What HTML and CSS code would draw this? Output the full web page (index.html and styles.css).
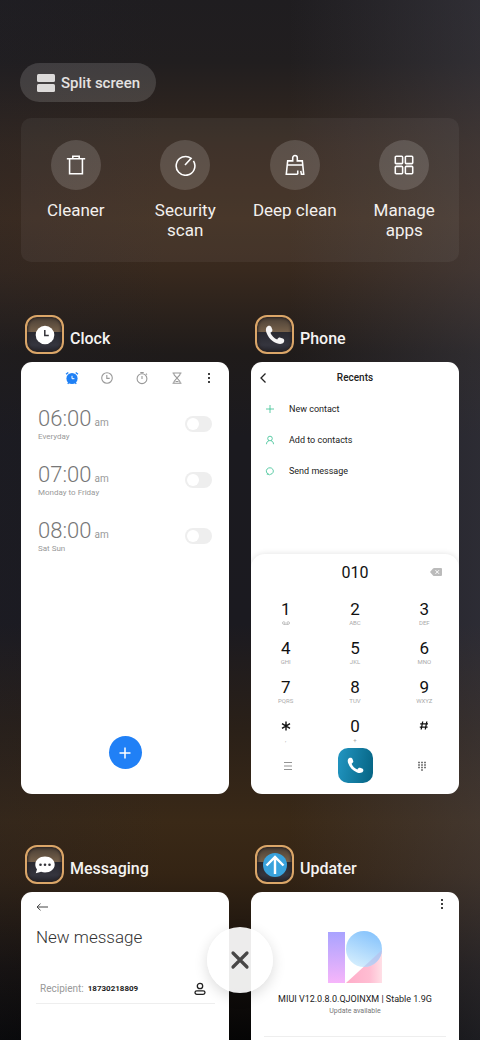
FILE: index.html
```html
<!DOCTYPE html>
<html lang="en">
<head>
<meta charset="utf-8">
<meta name="viewport" content="width=device-width, initial-scale=1">
<title>Recent apps</title>
<link rel="stylesheet" href="styles.css">
</head>
<body>
<svg class="defs" width="0" height="0" aria-hidden="true">
  <symbol id="handset" viewBox="0 0 20 20"><path d="M2.600 1.200C4.200 .3 5.800 .9 6.400 2.200L7.300 4.600C7.700 5.800 7.200 6.800 5.400 7.800C6.400 10.600 9.300 13.500 12.200 14.600C13.200 12.800 14.200 12.300 15.400 12.700L17.800 13.600C19.200 14.200 19.700 15.700 18.800 17.200C17.500 19.200 14.600 19.300 11.800 18.200C6.700 16.200 3 12.300 1.300 7.200C.5 4.600 .8 2.300 2.600 1.200Z"/></symbol>
  <symbol id="dots" viewBox="0 0 10 16"><circle cx="5" cy="4" r="1"/><circle cx="5" cy="8" r="1"/><circle cx="5" cy="12" r="1"/></symbol>
</svg>
<main class="screen">
  <button class="split"><svg width="18" height="18" viewBox="0 0 18 18"><rect width="18" height="8" rx="1.500"/><rect y="10" width="18" height="8" rx="1.500"/></svg>Split screen</button>

  <nav class="tools">
    <button class="tool"><span class="tool-icon"><svg class="line" viewBox="0 0 24 24"><path d="M2 5.200H22M5 5.200V21.500H19V5.200M8.500 5V2.500H15.500V5"/></svg></span>Cleaner</button>
    <button class="tool"><span class="tool-icon"><svg class="line" viewBox="0 0 24 24"><path d="M12 12L18.700 4.800A10.200 10.200 0 1 0 21.200 7.500"/></svg></span>Security scan</button>
    <button class="tool"><span class="tool-icon"><svg class="line" viewBox="0 0 24 24"><path d="M15 22H2.500L4 7.500H9.500V4.200A2.500 2.500 0 0 1 14.500 4.200V7.500H20L21.500 22H19L18.300 18.500M3.600 12H20.400M15 22V18"/></svg></span>Deep clean</button>
    <button class="tool"><span class="tool-icon"><svg class="line" viewBox="0 0 24 24"><rect x="2.500" y="2.500" width="8" height="8" rx="1"/><rect x="13.500" y="2.500" width="8" height="8" rx="1"/><rect x="2.500" y="13.500" width="8" height="8" rx="1"/><rect x="13.500" y="13.500" width="8" height="8" rx="1"/></svg></span>Manage apps</button>
  </nav>

  <div class="apps">
    <section class="app">
      <header class="app-head">
        <span class="app-icon"><svg viewBox="0 0 20 20"><circle cx="10" cy="10" r="9.300" fill="#fff"/><path d="M9.800 5V10.600H13.800" fill="none" stroke="#333238" stroke-width="1.500"/></svg></span>
        <h2>Clock</h2>
      </header>
      <div class="card clock">
        <div class="tabs">
          <button aria-label="Alarm"><svg width="16" height="16" viewBox="0 0 16 16"><circle cx="8" cy="8.500" r="5.600" fill="#1f80f5"/><path d="M2 4.200L4.300 2.400M14 4.200L11.700 2.400M3.700 13.800L5 12.500M12.300 13.800L11 12.500" stroke="#1f80f5" stroke-width="1.300"/><path d="M8 5.800V8.700H10.400" fill="none" stroke="#fff"/></svg></button>
          <button aria-label="World clock"><svg class="grey" width="16" height="16" viewBox="0 0 16 16"><circle cx="8" cy="8" r="5.300"/><path d="M7.800 5V8.400H10.700"/></svg></button>
          <button aria-label="Stopwatch"><svg class="grey" width="16" height="16" viewBox="0 0 16 16"><circle cx="8" cy="8.700" r="4.900"/><path d="M6.300 2.600H9.700M8 6V9M12 3.700L13 4.700"/></svg></button>
          <button aria-label="Timer"><svg class="grey" width="16" height="16" viewBox="0 0 16 16"><path d="M3.500 3H12.500M3.500 13.200H12.500M4.700 3.200C4.700 6 7.900 7 7.900 8.100C7.900 9.200 4.700 10.200 4.700 13M11.300 3.200C11.300 6 8.100 7 8.100 8.100C8.100 9.200 11.300 10.200 11.300 13M6.500 11.500H9.500"/></svg></button>
          <button aria-label="More"><svg width="10" height="16"><use href="#dots"/></svg></button>
        </div>
        <ul class="alarms">
          <li><label for="a6"><span class="time">06:00<small>am</small></span><span class="days">Everyday</span></label><input id="a6" class="switch" type="checkbox"></li>
          <li><label for="a7"><span class="time">07:00<small>am</small></span><span class="days">Monday to Friday</span></label><input id="a7" class="switch" type="checkbox"></li>
          <li><label for="a8"><span class="time">08:00<small>am</small></span><span class="days">Sat Sun</span></label><input id="a8" class="switch" type="checkbox"></li>
        </ul>
        <button class="add" aria-label="Add alarm"><svg width="12" height="12" viewBox="0 0 12 12"><path d="M6 .5V11.500M.5 6H11.500" stroke="#fff" stroke-width="1.500"/></svg></button>
      </div>
    </section>

    <section class="app">
      <header class="app-head">
        <span class="app-icon"><svg viewBox="0 0 20 20" fill="#f6f5f5"><use href="#handset"/></svg></span>
        <h2>Phone</h2>
      </header>
      <div class="card phone">
        <div class="bar">
          <button aria-label="Back"><svg width="8" height="12" viewBox="0 0 8 12"><path d="M6.500 1.500L2 6L6.500 10.500" fill="none" stroke="#222" stroke-width="1.300"/></svg></button>
          <h3>Recents</h3>
        </div>
        <div class="links">
          <button><svg class="green" width="10" height="10" viewBox="0 0 10 10"><path d="M5 1V9M1 5H9"/></svg>New contact</button>
          <button><svg class="green" width="10" height="10" viewBox="0 0 10 10"><circle cx="5" cy="3.500" r="2.300"/><path d="M1.500 9.200C1.500 7.200 2.600 6 4 5.800M8.500 9.200C8.500 7.200 7.400 6 6 5.800"/></svg>Add to contacts</button>
          <button><svg class="green" width="10" height="10" viewBox="0 0 10 10"><path d="M3.700 8.200A3.500 3.300 0 1 1 5.600 8.300L4.500 9L3.700 8.200H1.800"/></svg>Send message</button>
        </div>
        <div class="dialer">
          <div class="entry">
            <input type="tel" value="010" aria-label="Number">
            <button aria-label="Delete"><svg width="12" height="8" viewBox="0 0 12 8"><path d="M0 4L3 .6Q3.500 0 4.200 0H11Q12 0 12 1V7Q12 8 11 8H4.200Q3.500 8 3 7.400Z" fill="#bbb"/><path d="M5.500 2.200L9 5.800M9 2.200L5.500 5.800" stroke="#fff"/></svg></button>
          </div>
          <div class="keys">
            <button>1<small><svg width="8" height="4" viewBox="0 0 8 4" fill="none" stroke="#aaa" stroke-width=".7"><circle cx="1.800" cy="2" r="1.300"/><circle cx="6.200" cy="2" r="1.300"/><path d="M1.800 3.400H6.200"/></svg></small></button>
            <button>2<small>ABC</small></button>
            <button>3<small>DEF</small></button>
            <button>4<small>GHI</small></button>
            <button>5<small>JKL</small></button>
            <button>6<small>MNO</small></button>
            <button>7<small>PQRS</small></button>
            <button>8<small>TUV</small></button>
            <button>9<small>WXYZ</small></button>
            <button aria-label="Star"><svg width="10" height="20" viewBox="0 0 10 20"><path d="M5 5.500V14.500M1 7.700L9 12.300M9 7.700L1 12.300" stroke="#111" stroke-width="1.400"/></svg><small>,</small></button>
            <button>0<small>+</small></button>
            <button aria-label="Hash"><svg width="10" height="20" viewBox="0 0 10 20"><path d="M3.700 5.500L2.200 13.500M7.800 5.500L6.300 13.500M1.200 7.800H9M.8 11.200H8.600" stroke="#111" stroke-width="1.300"/></svg><small></small></button>
          </div>
          <div class="actions">
            <button aria-label="Menu"><svg width="10" height="8" viewBox="0 0 10 8"><path d="M1 .5H9M1 4H9M1 7.500H9" stroke="#777" stroke-width=".8"/></svg></button>
            <button class="call" aria-label="Call"><svg width="17" height="17" fill="#fff"><use href="#handset"/></svg></button>
            <button aria-label="Keypad"><svg width="10" height="10" viewBox="0 0 10 10"><path d="M1 1.500H9M1 4H9M1 6.500H9M4 9H6" stroke="#777" stroke-width="1.700" stroke-dasharray="2 1"/></svg></button>
          </div>
        </div>
      </div>
    </section>

    <section class="app">
      <header class="app-head">
        <span class="app-icon"><svg viewBox="0 0 20 20"><path d="M10 1.500C15.400 1.500 19.700 5 19.700 9.500S15.400 17.500 10 17.500C8.600 17.500 7.300 17.300 6.100 16.800L.8 18.200L2 14.200C.8 12.900.3 11.300.3 9.500C.3 5 4.600 1.500 10 1.500Z" fill="#fff"/><g fill="#333238"><circle cx="5.500" cy="9.700" r="1.300"/><circle cx="10" cy="9.700" r="1.300"/><circle cx="14.500" cy="9.700" r="1.300"/></g></svg></span>
        <h2>Messaging</h2>
      </header>
      <div class="card message">
        <button class="back" aria-label="Back"><svg width="12" height="8" viewBox="0 0 12 8"><path d="M4.500 .7L1 4L4.500 7.300M1 4H12" fill="none" stroke="#444"/></svg></button>
        <h3>New message</h3>
        <div class="to">
          <label for="to">Recipient:</label>
          <input id="to" type="tel" value="18730218809">
          <button aria-label="Contacts"><svg width="12" height="14" viewBox="0 0 12 14" fill="none" stroke="#222" stroke-width="1.300"><circle cx="6" cy="4" r="2.700"/><rect x="1" y="8.800" width="10" height="3.600" rx="1.800"/></svg></button>
        </div>
      </div>
    </section>

    <section class="app">
      <header class="app-head">
        <span class="app-icon"><svg class="up" viewBox="0 0 24 24"><circle cx="12" cy="12" r="12" fill="#39a2dc"/><path d="M12 21V4M3.500 12.500L12 4L20.500 12.500" fill="none" stroke="#fff" stroke-width="2.400"/></svg></span>
        <h2>Updater</h2>
      </header>
      <div class="card updater">
        <button class="more" aria-label="More"><svg width="10" height="16"><use href="#dots"/></svg></button>
        <svg class="logo" width="54" height="52" viewBox="0 0 54 52">
          <defs>
            <linearGradient id="one" x2="0" y2="1"><stop stop-color="#a9a3ff"/><stop offset="1" stop-color="#f6b5fa"/></linearGradient>
            <linearGradient id="ball" x1=".7" y1="0" x2=".3" y2="1"><stop stop-color="#86c3fc"/><stop offset="1" stop-color="#d5eefd"/></linearGradient>
            <linearGradient id="foot"><stop stop-color="#ffadc9"/><stop offset=".65" stop-color="#ffbdd2"/><stop offset="1" stop-color="#ffdfe6"/></linearGradient>
            <clipPath id="disc"><circle cx="36" cy="18" r="18"/></clipPath>
          </defs>
          <rect y="1" width="17" height="51" fill="url(#one)"/>
          <path d="M18 52L54 19V52Z" fill="url(#foot)"/>
          <circle cx="36" cy="18" r="18" fill="url(#ball)"/>
          <path d="M18 52L54 19V52Z" fill="#b8bdea" opacity=".6" clip-path="url(#disc)"/>
        </svg>
        <h3>MIUI V12.0.8.0.QJOINXM | Stable 1.9G</h3>
        <p>Update available</p>
        <hr>
      </div>
    </section>
  </div>

  <button class="close" aria-label="Close all"><svg width="20" height="20" viewBox="0 0 20 20"><path d="M3 3L17 17M17 3L3 17" stroke="#484747" stroke-width="3.200" stroke-linecap="round"/></svg></button>
</main>
</body>
</html>
```

FILE: styles.css
```css
* { box-sizing: border-box; }

body {
  margin: 0;
  background: #0a0909;
  font-family: Roboto, "Liberation Sans", sans-serif;
}

button {
  display: block;
  margin: 0;
  padding: 0;
  border: 0;
  background: none;
  color: inherit;
  font: inherit;
}

input { margin: 0; padding: 0; border: 0; background: none; font: inherit; color: inherit; }
h2, h3, p, ul { margin: 0; padding: 0; }
svg { display: block; flex: none; }
.defs { position: absolute; }

.screen {
  position: relative;
  height: 100vh;
  padding: 63px 21px 0;
  overflow: hidden;
  background:
    linear-gradient(90deg, rgba(30, 32, 44, 0.2), rgba(30, 32, 44, 0) 35%, rgba(90, 90, 105, 0) 60%, rgba(90, 90, 105, 0.28)),
    linear-gradient(#1f1d20 0, #211e1f 6%, #35281f 14%, #3f2d1f 21%, #38291e 26%, #1f1b1a 34%, #1b1a1f 42%, #1b1a20 60%, #2a2018 70%, #3a2917 79%, #342414 84%, #15100d 93%, #050505 100%);
}

.split {
  display: flex;
  align-items: center;
  gap: 6px;
  height: 39px;
  margin-left: -1px;
  padding: 0 16px 0 17px;
  border-radius: 20px;
  background: rgba(255, 255, 255, 0.14);
  color: #e4e2e1;
  font-size: 15px;
  font-weight: 500;
}
.split svg { fill: #dcdad9; }

.tools {
  display: grid;
  grid-template-columns: repeat(4, minmax(0, 1fr));
  margin-top: 16px;
  padding: 22px 0;
  border-radius: 10px;
  background: rgba(255, 255, 255, 0.05);
}
.tool {
  display: flex;
  flex-direction: column;
  align-items: center;
  gap: 10px;
  padding: 0 10px;
  color: #f3f0ee;
  font-size: 17px;
  line-height: 20px;
}
.tool-icon {
  display: grid;
  place-items: center;
  width: 50px;
  height: 50px;
  border-radius: 50%;
  background: rgba(255, 255, 255, 0.15);
}
.line { width: 22px; height: 22px; fill: none; stroke: #fff; stroke-width: 1.7; }

.apps {
  display: grid;
  grid-template-columns: repeat(2, minmax(0, 1fr));
  gap: 51px 22px;
  margin-top: 53px;
}
.app-head {
  display: flex;
  align-items: flex-end;
  gap: 6px;
  margin-bottom: 8px;
  padding-left: 4px;
}
.app-head h2 {
  padding-bottom: 5px;
  color: #f5f3f2;
  font-size: 16px;
  font-weight: 500;
  line-height: 20px;
}
.app-icon {
  display: grid;
  place-items: center;
  width: 39px;
  height: 39px;
  border: 2px solid #dba668;
  border-radius: 12px;
  background: linear-gradient(#4b4036, #75604a 42%, #292930 44%, #35353e 80%, #25252c);
  box-shadow: inset 0 0 3px 1px #292222;
}
.app-icon svg { width: 20px; height: 20px; }
.app-icon .up { width: 24px; height: 24px; }

.card {
  display: flex;
  flex-direction: column;
  aspect-ratio: 208 / 432;
  overflow: hidden;
  border-radius: 11px;
  background: #fff;
  color: #222;
}

.tabs { display: flex; gap: 19px; padding: 8px 0 0 43px; }
.grey { fill: none; stroke: #999; stroke-width: 1.1; }
.alarms {
  display: flex;
  flex-direction: column;
  gap: 18px;
  padding: 19px 17px 0;
  list-style: none;
  color: #999;
}
.alarms li { display: flex; align-items: center; justify-content: space-between; height: 38px; }
.time, .days { display: block; }
.time { font-size: 22px; font-weight: 300; line-height: 26px; color: #777; }
.time small { margin-left: 3px; font-size: 10px; font-weight: 400; line-height: 1; color: #999; }
.days { font-size: 8px; line-height: 10px; }
.switch {
  display: flex;
  align-items: center;
  appearance: none;
  width: 27px;
  height: 16px;
  padding: 0 2px;
  border-radius: 8px;
  background: #eee;
}
.switch::before { content: ""; width: 12px; height: 12px; border-radius: 50%; background: #fff; }
.switch:checked { justify-content: flex-end; background: #1f80f5; }
.add {
  display: grid;
  place-items: center;
  width: 33px;
  height: 33px;
  margin: auto auto 25px;
  border-radius: 50%;
  background: #2080f6;
}

.bar {
  display: grid;
  grid-template-columns: 8px 1fr 8px;
  align-items: center;
  padding: 8px 8px 0;
}
.bar h3 { font-size: 10px; font-weight: 500; line-height: 16px; text-align: center; }
.links { display: flex; flex-direction: column; padding: 7px 14px 0; }
.links button { display: flex; align-items: center; gap: 14px; height: 31px; font-size: 9px; }
.green { fill: none; stroke: #35bf90; stroke-width: 0.8; }
.dialer {
  margin-top: auto;
  padding-bottom: 11px;
  border-radius: 14px 14px 0 0;
  box-shadow: 0 0 6px rgba(0, 0, 0, 0.12);
  color: #111;
}
.entry {
  display: grid;
  grid-template-columns: 12px 1fr 12px;
  align-items: center;
  padding: 8px 17px 15px;
}
.entry input { grid-column: 2; width: 100%; height: 20px; font-size: 16px; text-align: center; }
.keys { display: grid; grid-template-columns: repeat(3, 1fr); row-gap: 9px; }
.keys button { display: flex; flex-direction: column; align-items: center; padding-top: 2px; font-size: 17px; line-height: 20px; }
.keys small { height: 8px; color: #aaa; font-size: 6px; line-height: 8px; }
.keys small svg { margin: 2px 0; }
.actions { display: flex; align-items: center; justify-content: space-between; padding: 4px 32px 0; }
.call {
  display: grid;
  place-items: center;
  width: 35px;
  height: 35px;
  border-radius: 10px;
  background: linear-gradient(100deg, #2296c2, #056382);
}

.message { padding: 11px 14px 0 15px; }
.back { align-self: flex-start; }
.message h3 { margin-top: 14px; color: #333; font-size: 17px; font-weight: 300; line-height: 24px; }
.to {
  display: flex;
  align-items: center;
  gap: 4px;
  height: 30px;
  margin-top: 25px;
  padding: 0 9px 0 4px;
  border-bottom: 1px solid #eee;
}
.to label { color: #999; font-size: 10px; }
.to input { flex: 1; min-width: 0; font-size: 8px; font-weight: 700; }

.updater { align-items: center; padding: 4px 13px 0; }
.more { align-self: flex-end; margin-right: -1px; }
.logo { margin-top: 19px; }
.updater h3 { margin-top: 9px; font-size: 9px; font-weight: 400; line-height: 14px; white-space: nowrap; }
.updater p { color: #777; font-size: 7px; line-height: 10px; }
.updater hr { width: 100%; height: 1px; margin: 20px 0 0; border: 0; background: #eee; }

.close {
  position: absolute;
  bottom: 47px;
  left: 50%;
  display: grid;
  place-items: center;
  width: 66px;
  height: 66px;
  margin-left: -33px;
  border-radius: 50%;
  background: rgba(255, 255, 255, 0.92);
  box-shadow: 0 4px 14px rgba(0, 0, 0, 0.14);
}
```
